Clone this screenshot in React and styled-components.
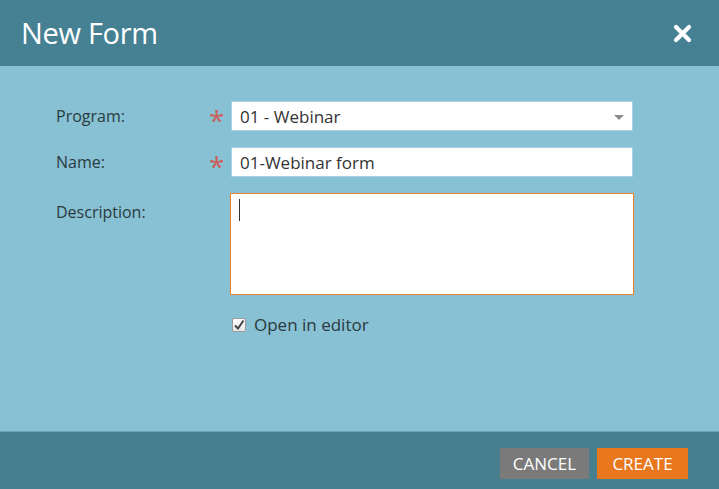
import React from "react";
import styled, { createGlobalStyle } from "styled-components";

const GlobalStyle = createGlobalStyle`
  html, body {
    margin: 0;
    padding: 0;
    height: 100%;
  }
  body {
    font-family: "Open Sans", "Liberation Sans", sans-serif;
    background: #88c1d3;
  }
  #root {
    height: 100%;
  }
`;

const Dialog = styled.div`
  display: flex;
  flex-direction: column;
  height: 100vh;
  background: #88c1d3;
`;

const Header = styled.header`
  height: 66px;
  flex: none;
  display: flex;
  align-items: center;
  justify-content: space-between;
  padding: 0 27px 0 21px;
  background: #468193;
  color: #fff;
`;

const Title = styled.h1`
  margin: 0 0 2px;
  font-size: 29px;
  font-weight: 400;
  letter-spacing: -0.3px;
`;

const CloseButton = styled.button`
  border: 0;
  background: none;
  padding: 0;
  width: 19px;
  height: 19px;
  cursor: pointer;
  display: flex;
`;

const Body = styled.main`
  flex: 1;
  padding: 35px 0 0 56px;
`;

const Form = styled.div`
  display: grid;
  grid-template-columns: 150px 25px 402px;
  row-gap: 16px;
  align-items: center;
`;

const Label = styled.label`
  font-size: 16px;
  color: #2b3a40;
  align-self: ${p => (p.$top ? "start" : "center")};
  padding-top: ${p => (p.$top ? "8px" : "0")};
`;

const Required = styled.span`
  align-self: start;
  height: 30px;
  box-sizing: border-box;
  padding: 5px 0 0 3px;
  color: #c8605c;
  font-size: 28px;
  line-height: 1;
`;

const Field = styled.div`
  position: relative;
  height: 30px;
  box-sizing: border-box;
  background: #fff;
  border: 1px solid #a9d3e0;
  display: flex;
  align-items: center;
  padding: 0 8px;
  font-size: 17px;
  color: #333;
`;

const Arrow = styled.span`
  position: absolute;
  right: 8px;
  top: 13px;
  width: 0;
  height: 0;
  border-left: 5px solid transparent;
  border-right: 5px solid transparent;
  border-top: 5px solid #8c8c8c;
`;

const TextArea = styled.div`
  grid-column: 3;
  height: 102px;
  box-sizing: border-box;
  margin-left: -1px;
  width: 404px;
  background: #fff;
  border: 1px solid #e8832e;
  padding: 5px 8px;
`;

const Caret = styled.span`
  display: block;
  width: 1px;
  height: 22px;
  background: #333;
`;

const CheckRow = styled.label`
  grid-column: 3;
  display: flex;
  align-items: center;
  gap: 8px;
  margin-top: 2px;
  font-size: 17px;
  color: #2b3a40;
`;

const Box = styled.span`
  width: 14px;
  height: 14px;
  box-sizing: border-box;
  border: 1px solid #9a9a9a;
  background: linear-gradient(#fff, #e6e6e6);
  border-radius: 2px;
  display: flex;
  align-items: center;
  justify-content: center;
  margin-left: 1px;
`;

const Footer = styled.footer`
  height: 58px;
  flex: none;
  box-sizing: border-box;
  display: flex;
  align-items: center;
  justify-content: flex-end;
  gap: 8px;
  padding: 6px 31px 0 0;
  background: #477f8f;
  border-top: 1px solid #6aa3b4;
`;

const Button = styled.button`
  height: 31px;
  width: ${p => p.$w}px;
  border: 0;
  padding: 0;
  background: ${p => (p.$primary ? "#e8771e" : "#7a7a7a")};
  color: #fff;
  font-family: inherit;
  font-size: 17px;
  text-transform: uppercase;
  cursor: pointer;
`;

export default function App() {
  return (
    <Dialog>
      <GlobalStyle />
      <Header>
        <Title>New Form</Title>
        <CloseButton aria-label="close">
          <svg width="19" height="19" viewBox="0 0 19 19">
            <path
              d="M3 3 L16 16 M16 3 L3 16"
              stroke="#fff"
              strokeWidth="4.2"
              strokeLinecap="round"
            />
          </svg>
        </CloseButton>
      </Header>
      <Body>
        <Form>
          <Label>Program:</Label>
          <Required>*</Required>
          <Field>
            01 - Webinar
            <Arrow />
          </Field>

          <Label>Name:</Label>
          <Required>*</Required>
          <Field>01-Webinar form</Field>

          <Label $top>Description:</Label>
          <span />
          <TextArea>
            <Caret />
          </TextArea>

          <CheckRow>
            <Box>
              <svg width="12" height="12" viewBox="0 0 12 12">
                <path
                  d="M2 6.5 L5 9.5 L10.5 1.5"
                  fill="none"
                  stroke="#444"
                  strokeWidth="2"
                />
              </svg>
            </Box>
            Open in editor
          </CheckRow>
        </Form>
      </Body>
      <Footer>
        <Button $w={89}>Cancel</Button>
        <Button $w={91} $primary>
          Create
        </Button>
      </Footer>
    </Dialog>
  );
}
